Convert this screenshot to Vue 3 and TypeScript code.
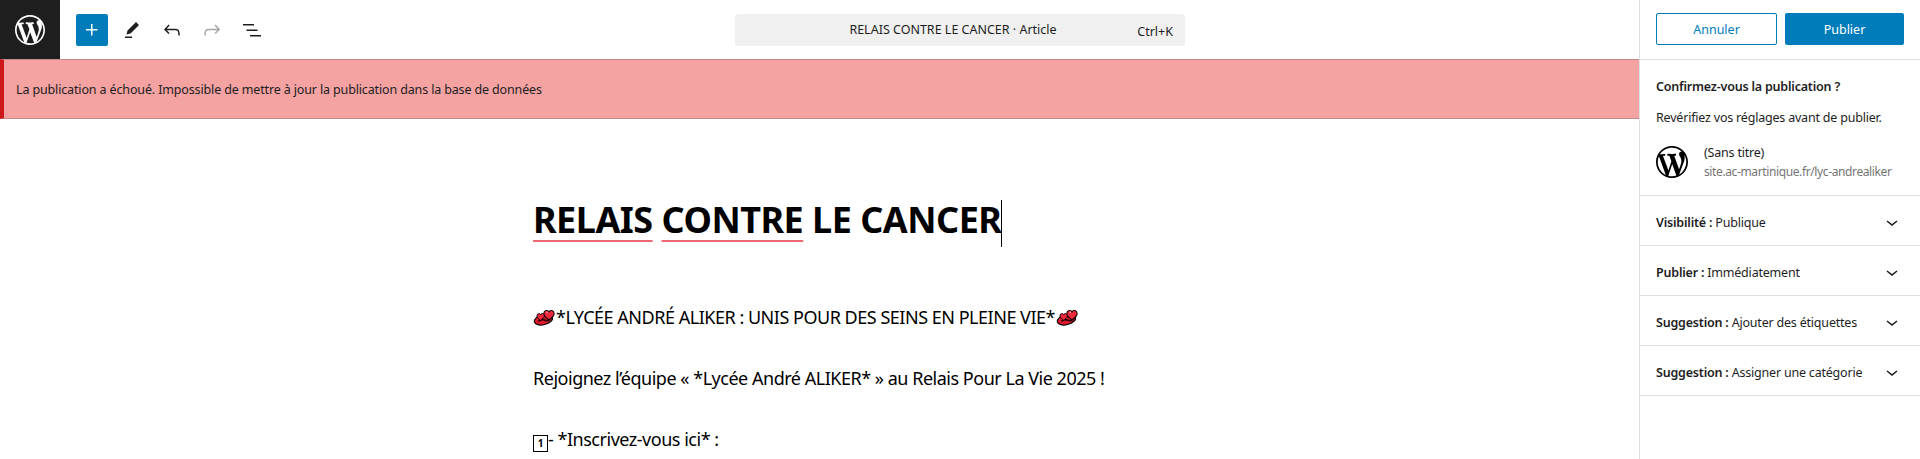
<script setup lang="ts">
const wpLogo = 'M20 10c0-5.51-4.49-10-10-10C4.48 0 0 4.49 0 10c0 5.52 4.48 10 10 10 5.51 0 10-4.48 10-10zM7.78 15.37L4.37 6.22c.55-.02 1.17-.08 1.17-.08.5-.06.44-1.13-.06-1.11 0 0-1.45.11-2.37.11-.18 0-.37 0-.58-.01C4.12 2.69 6.87 1.11 10 1.11c2.33 0 4.45.87 6.05 2.34-.68-.11-1.65.39-1.65 1.58 0 .74.45 1.36.9 2.1.35.61.55 1.36.55 2.46 0 1.49-1.4 5-1.4 5l-3.03-8.37c.54-.02.82-.17.82-.17.5-.05.44-1.25-.06-1.22 0 0-1.44.12-2.38.12-.87 0-2.33-.12-2.33-.12-.5-.03-.56 1.2-.06 1.22l.92.08 1.26 3.41zM17.41 10c.24-.64.74-1.87.43-4.25.7 1.29 1.05 2.71 1.05 4.25 0 3.29-1.73 6.24-4.4 7.78.97-2.59 1.94-5.2 2.92-7.78zM6.1 18.09C3.12 16.65 1.11 13.53 1.11 10c0-1.3.23-2.48.72-3.59C3.25 10.3 4.67 14.2 6.1 18.09zm4.03-6.63l2.58 6.98c-.86.29-1.76.45-2.71.45-.79 0-1.57-.11-2.29-.33.81-2.38 1.62-4.74 2.42-7.1z'

const heart = 'M0 -1.500C-1-3.500-4.500-3-4.500 0-4.500 2.500-1.500 4 0 5.500 1.500 4 4.500 2.500 4.500 0 4.500-3 1-3.500 0-1.500Z'

const tools = [
  { name: 'edit', d: 'm19 7-3-3-8.5 8.5-1 4 4-1L19 7Zm-7 11.5H5V20h7v-1.5Z', off: false },
  { name: 'undo', d: 'M18.3 11.7c-.6-.6-1.4-.9-2.3-.9H6.7l2.9-3.3-1.1-1-4.5 5L8.5 16l1-1-2.7-2.7H16c.5 0 .9.2 1.3.5 1 1 1 3.4 1 4.5v.3h1.5v-.2c0-1.5 0-4.3-1.5-5.7z', off: false },
  { name: 'redo', d: 'M15.6 6.5l-1.1 1 2.9 3.3H8c-.9 0-1.7.3-2.3.9-1.4 1.5-1.4 4.2-1.4 5.6v.2h1.5v-.3c0-1.1 0-3.5 1-4.5.3-.3.7-.5 1.3-.5h9.2L14.5 15l1.1 1.1 4.6-4.6-4.6-5z', off: true },
  { name: 'list', d: 'M3 6h11v1.5H3V6Zm3.5 5.5h11V13h-11v-1.5ZM21 17H10v1.5h11V17Z', off: false },
]

const panels = [
  { label: 'Visibilité :', value: 'Publique' },
  { label: 'Publier :', value: 'Immédiatement' },
  { label: 'Suggestion :', value: 'Ajouter des étiquettes' },
  { label: 'Suggestion :', value: 'Assigner une catégorie' },
]
</script>

<template>
  <div class="editor">
    <div class="main">
      <header class="topbar">
        <div class="logo">
          <svg viewBox="0 0 20 20" width="30" height="30"><path :d="wpLogo" fill="#fff" /></svg>
        </div>
        <div class="toolbar">
          <button class="add">
            <svg viewBox="0 0 24 24" width="24" height="24"><path d="M11 12.5V17.5H12.5V12.5H17.5V11H12.5V6H11V11H6V12.5H11Z" fill="#fff" /></svg>
          </button>
          <span v-for="t in tools" :key="t.name" class="tool" :class="{ off: t.off }">
            <svg viewBox="0 0 24 24" width="24" height="24"><path :d="t.d" fill="currentColor" /></svg>
          </span>
        </div>
        <div class="command">
          <span class="command-title">RELAIS CONTRE LE CANCER · Article</span>
          <span class="shortcut">Ctrl+K</span>
        </div>
      </header>

      <div class="notice">La publication a échoué. Impossible de mettre à jour la publication dans la base de données</div>

      <div class="content">
        <h1 class="title"><span class="typo">RELAIS</span> <span class="typo">CONTRE</span> LE CANCER<i class="caret"></i></h1>
        <p class="line-first">
          <svg v-for="side in ['start', 'end']" :key="side" class="emoji" :class="side" viewBox="0 0 20 17" width="22" height="19">
            <ellipse cx="9.500" cy="10.500" rx="8.500" ry="4.500" transform="rotate(-14 9.500 10.500)" fill="#e3172c" stroke="#000" stroke-width="1.100" />
            <path d="M5 12C7.500 9.500 10 10.500 11.500 11.200 13 11.800 14.500 11 15.500 10" fill="none" stroke="#2a0508" stroke-width="1.600" />
            <path :d="heart" transform="translate(14.500 5) scale(1.050)" fill="#f2273b" stroke="#000" stroke-width=".9" />
            <path :d="heart" transform="translate(7 7) scale(.75)" fill="#f2273b" stroke="#000" stroke-width="1.200" />
            <circle cx="13" cy="3.800" r=".8" fill="#ff9aa5" />
          </svg>
          <span class="line-text">*LYCÉE ANDRÉ ALIKER : UNIS POUR DES SEINS EN PLEINE VIE*</span>
        </p>
        <p>Rejoignez l’équipe « *Lycée André ALIKER* » au Relais Pour La Vie 2025 !</p>
        <p><span class="keycap">1</span>- *Inscrivez-vous ici* :</p>
      </div>
    </div>

    <aside class="sidebar">
      <div class="actions">
        <button class="btn secondary">Annuler</button>
        <button class="btn primary">Publier</button>
      </div>
      <section class="confirm">
        <div class="confirm-title">Confirmez-vous la publication ?</div>
        <div class="confirm-desc">Revérifiez vos réglages avant de publier.</div>
        <div class="site">
          <svg viewBox="0 0 20 20" width="32" height="32"><path :d="wpLogo" fill="#000" /></svg>
          <div class="site-info">
            <div class="site-name">(Sans titre)</div>
            <div class="site-url">site.ac-martinique.fr/lyc-andrealiker</div>
          </div>
        </div>
      </section>
      <div v-for="(p, i) in panels" :key="i" class="panel">
        <span class="panel-text"><b>{{ p.label }}</b> {{ p.value }}</span>
        <svg class="chevron" viewBox="0 0 24 24" width="24" height="24"><path d="M17.500 11.600L12 16l-5.500-4.400.9-1.200L12 14l4.500-3.600 1 1.200z" fill="#1e1e1e" /></svg>
      </div>
    </aside>
  </div>
</template>

<style>
html, body {
  margin: 0;
  background: #fff;
  overflow: hidden;
}
</style>

<style scoped>
.editor {
  display: flex;
  height: 459px;
  overflow: hidden;
  font-family: "Noto Sans", "Open Sans", sans-serif;
  font-size: 13px;
  color: #1e1e1e;
  background: #fff;
}

.main {
  flex: 1;
  min-width: 0;
}

.topbar {
  display: flex;
  align-items: center;
  height: 59px;
}

.logo {
  width: 60px;
  height: 59px;
  background: #1e1e1e;
  display: flex;
  align-items: center;
  justify-content: center;
}

.toolbar {
  display: flex;
  align-items: center;
  margin-left: 16px;
  width: 659px;
}

.add {
  width: 32px;
  height: 32px;
  padding: 0;
  border: 0;
  border-radius: 2px;
  background: #007cba;
  display: flex;
  align-items: center;
  justify-content: center;
  margin-right: 12px;
}

.tool {
  display: flex;
  width: 24px;
  margin-right: 16px;
  color: #1e1e1e;
}

.tool.off {
  color: #a8a8a8;
}

.command {
  width: 450px;
  height: 32px;
  box-sizing: border-box;
  padding-right: 14px;
  border-radius: 4px;
  background: #f0f0f0;
  display: flex;
  align-items: center;
  position: relative;
  justify-content: center;
  font-size: 12.500px;
}

.shortcut {
  position: absolute;
  right: 12px;
  top: 9px;
}

.notice {
  height: 58px;
  display: flex;
  align-items: center;
  padding-left: 12px;
  background: #f4a2a2;
  border-top: 1px solid #c58787;
  border-bottom: 1px solid #c58787;
  border-left: 4px solid #cc1818;
  font-size: 12.500px;
  letter-spacing: -0.14px;
}

.content {
  margin: 0 auto;
  width: 573px;
  color: #000;
  white-space: nowrap;
  font-size: 18px;
  letter-spacing: -0.48px;
}

.title {
  margin: 76px 0 0;
  font-size: 36px;
  line-height: 50px;
  font-weight: 700;
  letter-spacing: -0.5px;
}

.typo {
  text-decoration: underline;
  text-decoration-color: #ef6a70;
  text-decoration-thickness: 2px;
  text-decoration-skip-ink: none;
  text-underline-offset: 7px;
}

.caret {
  display: inline-block;
  width: 1px;
  height: 47px;
  background: #000;
  vertical-align: middle;
}

.content p {
  margin: 34px 0 0;
  line-height: 27px;
}

.content p.line-first {
  margin-top: 57px;
  display: flex;
  align-items: center;
  width: max-content;
}

.emoji {
  margin: 0 1px 0 0;
}

.emoji.end {
  order: 2;
  margin-left: 1px;
}

.line-text {
  order: 1;
}

.keycap {
  display: inline-block;
  box-sizing: border-box;
  width: 15px;
  height: 17px;
  border: 1px solid #000;
  font-size: 10px;
  font-weight: 700;
  line-height: 15px;
  text-align: center;
  letter-spacing: 0;
  vertical-align: -1px;
}

.sidebar {
  width: 280px;
  flex: none;
  border-left: 1px solid #e0e0e0;
  letter-spacing: -0.2px;
  font-size: 12.500px;
}

.actions {
  display: flex;
  gap: 8px;
  height: 60px;
  padding: 13px 16px 0;
  box-sizing: border-box;
  border-bottom: 1px solid #e0e0e0;
}

.btn {
  flex: 1;
  height: 32px;
  border-radius: 2px;
  font: inherit;
  padding: 0;
}

.btn.secondary {
  background: #fff;
  color: #007cba;
  border: 1px solid #007cba;
}

.btn.primary {
  background: #007cba;
  color: #fff;
  border: 0;
}

.confirm {
  height: 136px;
  box-sizing: border-box;
  padding: 17px 16px 0;
  border-bottom: 1px solid #e0e0e0;
}

.confirm-title {
  font-weight: 600;
  line-height: 20px;
}

.confirm-desc {
  margin-top: 11px;
  line-height: 20px;
}

.site {
  display: flex;
  align-items: center;
  gap: 16px;
  margin-top: 15px;
}

.site-name {
  line-height: 20px;
}

.site-url {
  font-size: 12px;
  color: #757575;
  line-height: 18px;
  letter-spacing: -0.38px;
}

.panel {
  height: 50px;
  box-sizing: border-box;
  display: flex;
  align-items: center;
  justify-content: space-between;
  padding: 0 16px;
  border-bottom: 1px solid #e0e0e0;
}

.panel-text {
  margin-top: 4px;
}

.chevron {
  margin-top: 2px;
}

.panel b {
  font-weight: 600;
}
</style>
